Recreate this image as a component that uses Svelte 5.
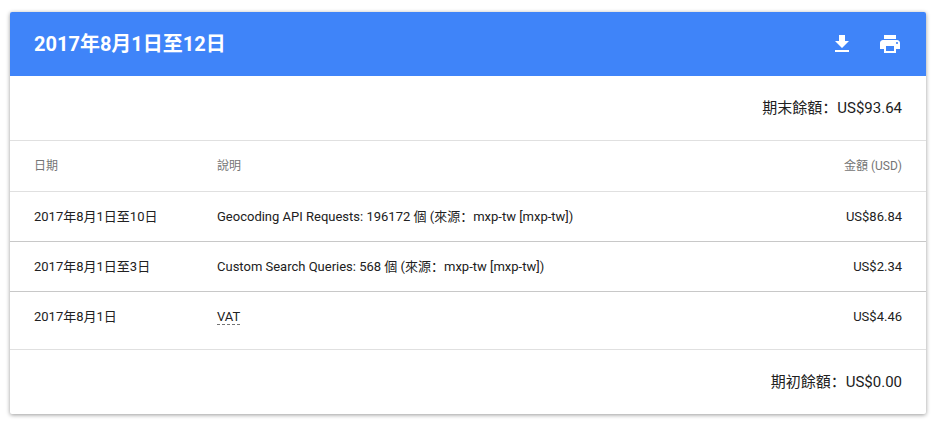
<script>
  const rows = [
    { date: '2017年8月1日至10日', desc: 'Geocoding API Requests: 196172 個 (來源：mxp-tw [mxp-tw])', amount: 'US$86.84' },
    { date: '2017年8月1日至3日', desc: 'Custom Search Queries: 568 個 (來源：mxp-tw [mxp-tw])', amount: 'US$2.34' },
    { date: '2017年8月1日', desc: 'VAT', amount: 'US$4.46', tip: true }
  ];
</script>

<div class="page">
  <section class="card">
    <header class="top">
      <h1>2017年8月1日至12日</h1>
      <div class="actions">
        <svg viewBox="0 0 24 24" width="24" height="24" fill="#fff"><path d="M19 9h-4V3H9v6H5l7 7 7-7zM5 18v2h14v-2H5z" /></svg>
        <svg viewBox="0 0 24 24" width="24" height="24" fill="#fff"><path d="M19 8H5c-1.66 0-3 1.34-3 3v6h4v4h12v-4h4v-6c0-1.66-1.34-3-3-3zm-3 11H8v-5h8v5zm3-7c-.55 0-1-.45-1-1s.45-1 1-1 1 .45 1 1-.45 1-1 1zm-1-9H6v4h12V3z" /></svg>
      </div>
    </header>

    <div class="balance end">期末餘額：US$93.64</div>

    <div class="row head">
      <div>日期</div>
      <div>說明</div>
      <div class="amount">金額 (USD)</div>
    </div>

    {#each rows as row}
      <div class="row" class:last={row.tip}>
        <div>{row.date}</div>
        <div>{#if row.tip}<span class="tip">{row.desc}</span>{:else}{row.desc}{/if}</div>
        <div class="amount">{row.amount}</div>
      </div>
    {/each}

    <div class="balance start">期初餘額：US$0.00</div>
  </section>
</div>

<style>
  :global(body) {
    background: #fff;
  }

  .page {
    padding: 12px 11px 9px 10px;
    font-family: Roboto, "Noto Sans CJK SC", sans-serif;
  }

  .card {
    background: #fff;
    border-radius: 2px;
    box-shadow: 0 1px 4px rgba(0, 0, 0, 0.4);
    overflow: hidden;
  }

  .top {
    height: 64px;
    padding: 0 24px;
    background: #3f84f9;
    color: #fff;
    display: flex;
    align-items: center;
    justify-content: space-between;
  }

  h1 {
    margin: -3px 0 0;
    font-size: 20px;
    font-weight: 700;
  }

  .actions {
    display: flex;
    gap: 24px;
  }

  .balance {
    padding: 0 24px 3px;
    font-size: 15px;
    color: #212121;
    display: flex;
    align-items: center;
    justify-content: flex-end;
  }

  .end {
    height: 61px;
    border-bottom: 1px solid #e0e0e0;
  }

  .start {
    height: 61px;
    border-top: 1px solid #e0e0e0;
  }

  .row {
    height: 49px;
    padding: 0 24px;
    display: grid;
    grid-template-columns: 183px 1fr auto;
    align-items: center;
    font-size: 13px;
    line-height: 16px;
    color: #212121;
    border-bottom: 1px solid #c8c8c8;
  }

  .row.head {
    height: 50px;
    font-size: 12px;
    color: #757575;
    border-bottom-color: #e0e0e0;
  }

  .row.last {
    height: 49px;
    padding-bottom: 8px;
    border-bottom: none;
  }

  .amount {
    text-align: right;
  }

  .tip {
    border-bottom: 1px dashed #757575;
  }
</style>
